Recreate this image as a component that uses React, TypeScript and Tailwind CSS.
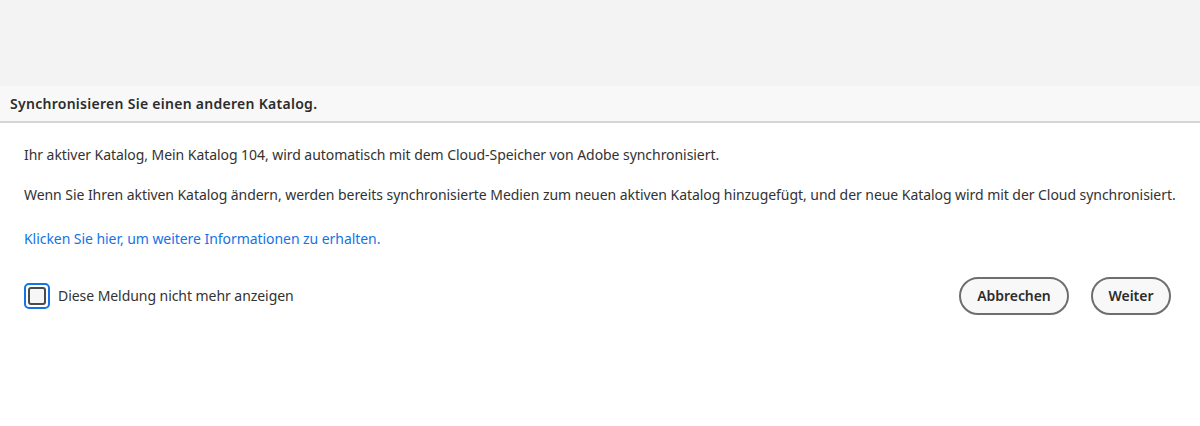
export default function App() {
  const font = { fontFamily: '"Noto Sans", "Open Sans", Arial, sans-serif' };
  return (
    <div className="flex h-[426px] w-[1200px] flex-col bg-white text-[#2c2c2c]" style={font}>
      <div className="h-[86px] bg-[#f3f3f3]" />
      <div className="flex h-[37px] items-center border-b-2 border-[#d5d5d5] bg-[#f8f8f8] px-[10px]">
        <h1 className="text-[14px] font-semibold tracking-[0.02em] text-[#2c2c2c]">Synchronisieren Sie einen anderen Katalog.</h1>
      </div>
      <div className="flex flex-col px-[24px] pt-[22px] text-[14px] leading-[20px] tracking-[-0.004em] text-[#323232]">
        <p>Ihr aktiver Katalog, Mein Katalog 104, wird automatisch mit dem Cloud-Speicher von Adobe synchronisiert.</p>
        <p className="mt-[20px]">
          Wenn Sie Ihren aktiven Katalog ändern, werden bereits synchronisierte Medien zum neuen aktiven Katalog hinzugefügt, und der neue Katalog wird mit der Cloud synchronisiert.
        </p>
        <a className="mt-[24px] self-start text-[#1473e6]" href="#">Klicken Sie hier, um weitere Informationen zu erhalten.</a>
        <div className="mt-[28px] flex items-center justify-between">
          <label className="flex items-center gap-[8px]">
            <span className="flex h-[26px] w-[26px] items-center justify-center rounded-[5px] border-2 border-[#1473e6]">
              <span className="h-[18px] w-[18px] rounded-[3px] border-2 border-[#4b4b4b] bg-[#f6f6f6]" />
            </span>
            <span>Diese Meldung nicht mehr anzeigen</span>
          </label>
          <div className="flex items-center gap-[22px] pr-[5px]">
            <button className="h-[38px] w-[110px] rounded-full border-2 border-[#6e6e6e] bg-[#f8f8f8] text-[14px] font-semibold text-[#2c2c2c]">
              Abbrechen
            </button>
            <button className="h-[38px] w-[80px] rounded-full border-2 border-[#6e6e6e] bg-[#f8f8f8] text-[14px] font-semibold text-[#2c2c2c]">
              Weiter
            </button>
          </div>
        </div>
      </div>
    </div>
  );
}
